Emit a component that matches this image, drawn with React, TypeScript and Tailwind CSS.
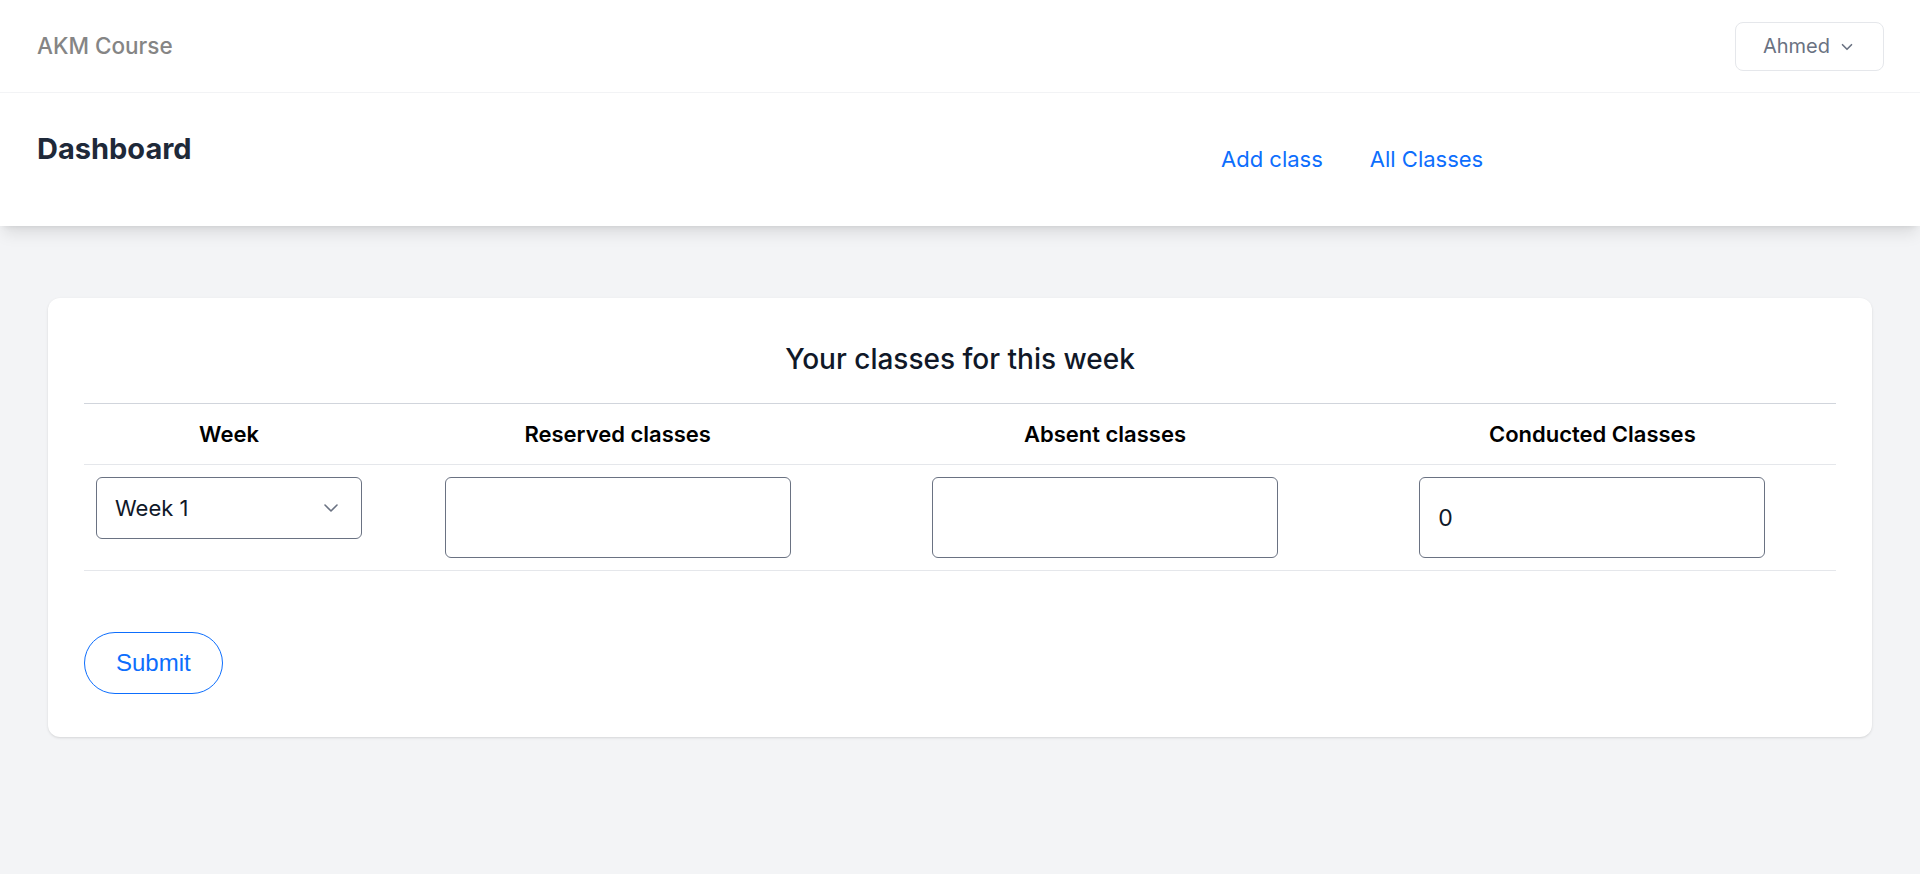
import React from "react";
import { ChevronDown } from "lucide-react";

const columns = ["Week", "Reserved classes", "Absent classes", "Conducted Classes"];

const NumberInput: React.FC<{ value?: string }> = ({ value }) => {
  return (
    <input
      type="text"
      defaultValue={value}
      className="block mx-auto w-[346px] h-[81px] border border-gray-500 rounded-md px-[18px] text-[23px] text-gray-900 bg-white"
    />
  );
};

const App: React.FC = () => {
  return (
    <div className="min-h-[874px] bg-gray-100 font-['Inter',sans-serif]">
      {/* top nav */}
      <div className="bg-white h-[93px] border-b border-gray-100 flex items-center justify-between px-[37px]">
        <div className="text-[22.5px] font-medium text-[#858585]">AKM Course</div>
        <button className="h-[49px] w-[149px] -mr-px border border-gray-200 rounded-lg flex items-center justify-center gap-2 text-[20px] text-gray-500">
          Ahmed <ChevronDown className="w-[18px] h-[18px] mt-px" strokeWidth={2.2} />
        </button>
      </div>

      {/* page header */}
      <div className="bg-white h-[133px] shadow-lg flex items-start pl-[37px]">
        <h1 className="w-[1184px] pt-[38px] text-[29px] leading-9 font-bold text-gray-800">Dashboard</h1>
        <div className="flex gap-[47px] pt-[52px] text-[22px] leading-7 text-[#0d6efd]">
          <a href="#">Add class</a>
          <a href="#">All Classes</a>
        </div>
      </div>

      {/* card */}
      <div className="px-12 pt-[72px]">
        <div className="bg-white rounded-xl shadow-sm px-9 pt-[43px] pb-[43px]">
          <h2 className="text-center text-[28px] leading-9 font-medium text-gray-900 mb-[26px]">
            Your classes for this week
          </h2>
          <table className="w-full table-fixed border-collapse">
            <colgroup>
              <col className="w-[290px]" />
              <col />
              <col />
              <col />
            </colgroup>
            <thead>
              <tr className="border-t border-gray-300 border-b border-b-gray-200">
                {columns.map((c) => (
                  <th key={c} className="py-[15px] text-[22px] leading-[30px] font-semibold text-black text-center">
                    {c}
                  </th>
                ))}
              </tr>
            </thead>
            <tbody>
              <tr className="border-b border-gray-200">
                <td className="px-3 pt-3 pb-3 align-top">
                  <div className="relative">
                    <select className="appearance-none w-full h-[62px] border border-gray-500 rounded-md pl-[18px] text-[22px] text-gray-900 bg-white">
                      <option>Week 1</option>
                      <option>Week 2</option>
                      <option>Week 3</option>
                    </select>
                    <ChevronDown
                      className="absolute right-[19px] top-[19px] w-6 h-6 text-gray-500 pointer-events-none"
                      strokeWidth={1.6}
                    />
                  </div>
                </td>
                <td className="pt-3 pb-3">
                  <NumberInput />
                </td>
                <td className="pt-3 pb-3">
                  <NumberInput />
                </td>
                <td className="pt-3 pb-3">
                  <NumberInput value="0" />
                </td>
              </tr>
            </tbody>
          </table>
          <button className="mt-[61px] h-[62px] px-[31px] rounded-full border border-[#0d6efd] text-[#0d6efd] text-[24px] font-['Liberation_Sans',Arial,sans-serif]">
            Submit
          </button>
        </div>
      </div>
    </div>
  );
};

export default App;
